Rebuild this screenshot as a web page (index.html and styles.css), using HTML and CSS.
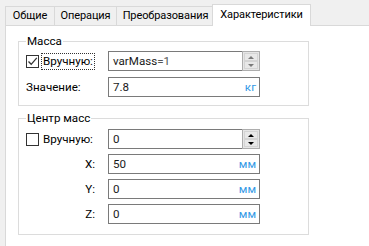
FILE: index.html
```html
<!DOCTYPE html>
<html lang="ru">
<head>
<meta charset="utf-8">
<link rel="stylesheet" href="styles.css">
</head>
<body>
<div class="tabs">
  <div class="tab tab-general">Общие</div>
  <div class="tab tab-op">Операция</div>
  <div class="tab tab-trans">Преобразования</div>
  <div class="tab tab-props active">Характеристики</div>
</div>
<div class="panel">
  <fieldset class="group g-mass">
    <legend>Масса</legend>
    <div class="row">
      <label class="chk">
        <span class="box"><svg width="11" height="11" viewBox="0 0 11 11"><path d="M1.5 5.5 L4.2 8.3 L9.8 1.8" fill="none" stroke="#333" stroke-width="1.3"/></svg></span>
        <span class="chk-text focus">Вручную:</span>
      </label>
      <div class="field">
        <span class="val">varMass<span class="dim">=1</span></span>
        <span class="spinner dis"><span class="sbtn"><i class="tri up"></i></span><span class="sbtn"><i class="tri down"></i></span></span>
      </div>
    </div>
    <div class="row">
      <span class="lbl">Значение:</span>
      <div class="field"><span class="val">7.8</span><span class="unit">кг</span></div>
    </div>
  </fieldset>
  <fieldset class="group g-center">
    <legend>Центр масс</legend>
    <div class="row">
      <label class="chk">
        <span class="box"></span>
        <span class="chk-text">Вручную:</span>
      </label>
      <div class="field">
        <span class="val">0</span>
        <span class="spinner"><span class="sbtn"><i class="tri up"></i></span><span class="sbtn"><i class="tri down"></i></span></span>
      </div>
    </div>
    <div class="row">
      <span class="lbl axis">X:</span>
      <div class="field"><span class="val">50</span><span class="unit">мм</span></div>
    </div>
    <div class="row">
      <span class="lbl axis">Y:</span>
      <div class="field"><span class="val">0</span><span class="unit">мм</span></div>
    </div>
    <div class="row">
      <span class="lbl axis">Z:</span>
      <div class="field"><span class="val">0</span><span class="unit">мм</span></div>
    </div>
  </fieldset>
</div>
</body>
</html>
```
FILE: styles.css
```css
html, body {
  margin: 0;
  padding: 0;
}
body {
  width: 369px;
  height: 246px;
  overflow: hidden;
  background: #f0f0f0;
  font-family: Roboto, "Noto Sans", sans-serif;
  font-size: 11.6px;
  color: #000;
  display: flex;
  flex-direction: column;
}
.tabs {
  display: flex;
  align-items: flex-end;
  height: 25px;
  flex: none;
  padding-left: 5px;
  position: relative;
  z-index: 2;
  font-size: 11px;
  letter-spacing: -0.1px;
}
.tab {
  box-sizing: border-box;
  height: 19px;
  line-height: 17px;
  border: 1px solid #d9d9d9;
  border-bottom: none;
  background: #f0f0f0;
  margin-right: -1px;
  white-space: nowrap;
  text-align: center;
  overflow: hidden;
}
.tab-general { width: 50px; }
.tab-op { width: 63px; }
.tab-trans { width: 99px; }
.tab-props { width: 99px; }
.tab.active {
  height: 22px;
  line-height: 19px;
  background: #fff;
  margin: 0 -2px -1px -2px;
  position: relative;
  z-index: 3;
}
.panel {
  flex: 1;
  margin-left: 5px;
  background: #fff;
  border-top: 1px solid #d9d9d9;
  border-left: 1px solid #d9d9d9;
  padding-top: 8px;
}
.group {
  box-sizing: border-box;
  width: 291px;
  margin: 0 0 0 12px;
  border: 1px solid #dcdcdc;
  padding: 3px 0 8px 7px;
  display: flex;
  flex-direction: column;
  gap: 6px;
}
.g-center {
  margin-top: 5px;
  padding-top: 4px;
  padding-bottom: 10px;
  gap: 5px;
}
.group legend {
  padding: 0 1px;
  margin-left: 0;
  line-height: 14px;
  height: 14px;
}
.row {
  display: grid;
  grid-template-columns: 82px 152px;
  align-items: center;
  height: 20px;
}
.lbl {
  line-height: 20px;
}
.lbl.axis {
  text-align: right;
  padding-right: 13px;
}
.chk {
  display: flex;
  align-items: center;
  gap: 2px;
}
.box {
  box-sizing: border-box;
  width: 13px;
  height: 13px;
  border: 1px solid #333;
  background: #fff;
  display: flex;
  align-items: center;
  justify-content: center;
}
.chk-text {
  line-height: 13px;
  padding: 1px 1px;
  border: 1px dotted transparent;
}
.chk-text.focus {
  border-color: #333;
}
.field {
  box-sizing: border-box;
  height: 20px;
  border: 1px solid #7a7a7a;
  background: #fff;
  display: flex;
  align-items: center;
  position: relative;
  padding-left: 4px;
}
.val {
  flex: 1;
  color: #1a1a1a;
}
.dim {
  color: #555;
}
.unit {
  color: #3399e6;
  padding-right: 3px;
}
.spinner {
  position: absolute;
  right: -1px;
  top: -1px;
  bottom: -1px;
  width: 18px;
  box-sizing: border-box;
  border: 1px solid #adadad;
  background: #e6e6e6;
  display: flex;
  flex-direction: column;
  padding: 1px;
}
.sbtn {
  flex: 1;
  border: 1px solid #d4d4d4;
  background: #e8e8e8;
  display: flex;
  align-items: center;
  justify-content: center;
}
.tri {
  width: 0;
  height: 0;
  border-left: 3px solid transparent;
  border-right: 3px solid transparent;
}
.tri.up {
  border-bottom: 3px solid #000;
}
.tri.down {
  border-top: 3px solid #000;
}
.spinner.dis .tri.up {
  border-bottom-color: #7a7a7a;
}
.spinner.dis .tri.down {
  border-top-color: #7a7a7a;
}
```
